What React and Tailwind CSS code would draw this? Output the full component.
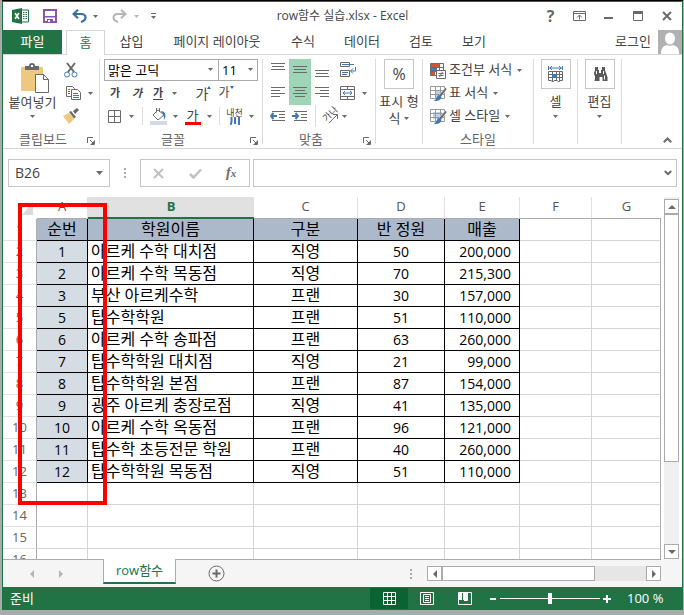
import clsx from "clsx";

const columns = [
  { name: "A", width: "w-[51px]" },
  { name: "B", width: "w-[166px]" },
  { name: "C", width: "w-[104px]" },
  { name: "D", width: "w-[87px]" },
  { name: "E", width: "w-[75px]" },
  { name: "F", width: "w-[72px]" },
  { name: "G", width: "" },
];

const headers = ["순번", "학원이름", "구분", "반 정원", "매출"];

const records = [
  [1, "아르케 수학 대치점", "직영", 50, "200,000"],
  [2, "아르케 수학 목동점", "직영", 70, "215,300"],
  [3, "부산 아르케수학", "프랜", 30, "157,000"],
  [5, "탑수학학원", "프랜", 51, "110,000"],
  [6, "아르케 수학 송파점", "프랜", 63, "260,000"],
  [7, "탑수학학원 대치점", "직영", 21, "99,000"],
  [8, "탑수학학원 본점", "프랜", 87, "154,000"],
  [9, "광주 아르케 충장로점", "직영", 41, "135,000"],
  [10, "아르케 수학 옥동점", "프랜", 96, "121,000"],
  [11, "탑수학 초등전문 학원", "프랜", 40, "260,000"],
  [12, "탑수학학원 목동점", "직영", 51, "110,000"],
];

const emptyRows = [13, 14, 15, 16];

const tabs = [
  { label: "삽입", width: "w-[53px]" },
  { label: "페이지 레이아웃", width: "w-[118px]" },
  { label: "수식", width: "w-[54px]" },
  { label: "데이터", width: "w-[64px]" },
  { label: "검토", width: "w-[54px]" },
  { label: "보기", width: "w-[52px]" },
];

function Arrow({ className }) {
  return (
    <svg
      className={clsx("shrink-0", className || "text-[#6a6a6a]")}
      width="5"
      height="3"
      viewBox="0 0 5 3"
      fill="currentColor"
      aria-hidden="true"
    >
      <path d="M0 0h5L2.500 3z" />
    </svg>
  );
}

function Icon({ w = 16, h = 16, className, children }) {
  return (
    <svg
      className={clsx("shrink-0", className)}
      width={w}
      height={h}
      viewBox={`0 0 ${w} ${h}`}
      fill="none"
      stroke="#6a6a6a"
      aria-hidden="true"
    >
      {children}
    </svg>
  );
}

function Tool({ label, className, children }) {
  return (
    <button
      type="button"
      aria-label={label}
      className={clsx("flex h-[22px] shrink-0 items-center justify-center", className)}
    >
      {children}
    </button>
  );
}

function Divider() {
  return <div className="h-[85px] w-px shrink-0 bg-[#dcdcdc]" />;
}

function Group({ label, launcher, className, children }) {
  return (
    <section aria-label={label} className={clsx("relative flex shrink-0 flex-col", className)}>
      <div className="h-[68px]">{children}</div>
      <div className={clsx("pt-1 text-center leading-[17px] text-[#666]", launcher && "pr-4")}>
        {label}
      </div>
      {launcher && (
        <button type="button" aria-label={`${label} 설정`} className="absolute right-1 bottom-[3px]">
          <Icon w={8} h={8} className="block">
            <path d="M.5 6V.5H6M3 3l3 3M7.500 3.500v4h-4" />
            <path d="M7 4v3H4z" fill="#6a6a6a" stroke="none" />
          </Icon>
        </button>
      )}
    </section>
  );
}

// Horizontal strokes used by the alignment buttons
function Lines({ rows, top = 3 }) {
  return (
    <Icon>
      {rows.map(([x, w], i) => (
        <path key={i} d={`M${x} ${top + i * 3 + 0.5}h${w}`} />
      ))}
    </Icon>
  );
}

function TitleBar() {
  const windowButton = "flex h-7 w-[29px] items-center justify-center";
  return (
    <header className="flex h-7 shrink-0 items-center">
      <div className="flex w-[170px] items-center pl-[9px]">
        <svg width="17" height="16" viewBox="0 0 17 16" aria-label="Excel">
          <path d="M8 2h8.500v12H8z" fill="#fff" stroke="#217346" />
          <path d="M11 4.500h1.500M13.500 4.500H15M11 6.500h1.500M13.500 6.500H15M11 8.500h1.500M13.500 8.500H15M11 10.500h1.500M13.500 10.500H15" stroke="#217346" />
          <path d="M0 2l10-2v16L0 14z" fill="#217346" />
          <path d="M3 5l4 6M7 5l-4 6" stroke="#fff" strokeWidth="1.600" />
        </svg>
        <button type="button" aria-label="저장" className="ml-[14px]">
          <svg className="block" width="14" height="14" viewBox="0 0 14 14">
            <path d="M1 1h12v12H1z" fill="#fff" stroke="#8657ae" strokeWidth="2" />
            <path d="M2 7h10v1.500H2zM4 10h6v3H4z" fill="#8657ae" />
            <path d="M5 11h2v2H5z" fill="#fff" />
          </svg>
        </button>
        <button type="button" aria-label="실행 취소" className="ml-[15px] flex items-center gap-[6px]">
          <Icon w={15} h={14}>
            <path d="M1.500 5H9c3 0 4.500 1.500 4.500 3.500S12 12 9 13" stroke="#3a6ea8" strokeWidth="2.200" />
            <path d="M6 .8L1.500 5 6 9.200" stroke="#3a6ea8" strokeWidth="2.200" />
          </Icon>
          <Arrow />
        </button>
        <button type="button" aria-label="다시 실행" className="ml-[14px] flex items-center gap-[7px]">
          <Icon w={15} h={14}>
            <path d="M13.500 5H6C3 5 1.500 6.500 1.500 8.500S3 12 6 13" stroke="#b5b5b5" strokeWidth="2" />
            <path d="M9 .8L13.500 5 9 9.200" stroke="#b5b5b5" strokeWidth="2" />
          </Icon>
          <Arrow className="text-[#b5b5b5]" />
        </button>
        <button type="button" aria-label="빠른 실행 도구 모음" className="ml-3">
          <Icon w={5} h={6} className="block">
            <path d="M0 .5h5" />
            <path d="M0 3h5L2.500 6z" fill="#6a6a6a" stroke="none" />
          </Icon>
        </button>
      </div>
      <h1 className="flex-1 text-center text-[12px] text-[#444]">row함수 실습.xlsx - Excel</h1>
      <div className="flex w-[170px] items-center justify-end pr-px">
        <button
          type="button"
          aria-label="도움말"
          className={clsx(windowButton, "text-base font-bold text-[#6a6a6a]")}
        >
          ?
        </button>
        <button type="button" aria-label="리본 메뉴 표시 옵션" className={windowButton}>
          <Icon w={13} h={10} className="block">
            <path d="M.5.5h12v9H.5zM1 2.500h11M6.500 8.500V4M4 6.500L6.500 4 9 6.500" />
          </Icon>
        </button>
        <button type="button" aria-label="최소화" className={windowButton}>
          <Icon w={9} h={10} className="block">
            <path d="M0 7h9" strokeWidth="2" />
          </Icon>
        </button>
        <button type="button" aria-label="최대화" className={windowButton}>
          <Icon w={10} h={10} className="block">
            <path d="M.5.5h9v9H.5z" />
            <path d="M0 1.500h10" strokeWidth="3" />
          </Icon>
        </button>
        <button type="button" aria-label="닫기" className={windowButton}>
          <Icon w={10} h={10} className="block">
            <path d="M1 1l8 8M9 1L1 9" strokeWidth="2" />
          </Icon>
        </button>
      </div>
    </header>
  );
}

function TabBar() {
  return (
    <nav className="flex h-[25px] shrink-0 border-b border-[#d4d4d4] text-[13px] text-[#444]">
      <button type="button" className="w-[59px] bg-[#217346] text-white">
        파일
      </button>
      <button
        type="button"
        className="ml-1 -mb-px w-[39px] border border-b-0 border-[#d4d4d4] bg-white text-[#217346]"
      >
        홈
      </button>
      {tabs.map((tab) => (
        <button key={tab.label} type="button" className={clsx("shrink-0", tab.width)}>
          {tab.label}
        </button>
      ))}
      <button type="button" className="mr-[7px] ml-auto">
        로그인
      </button>
      <svg width="24" height="24" viewBox="0 0 24 24" aria-hidden="true">
        <path d="M0 0h24v24H0z" fill="#b1b1b1" />
        <ellipse cx="12" cy="8.500" rx="5" ry="6" fill="#fff" />
        <path d="M3 24c0-6 2-8 6-9l3 1 3-1c4 1 6 3 6 9z" fill="#fff" />
      </svg>
    </nav>
  );
}

function ClipboardGroup() {
  return (
    <Group label="클립보드" launcher className="w-[96px]">
      <div className="flex">
        <button type="button" className="flex w-[59px] shrink-0 flex-col items-center pt-1">
          <Icon w={28} h={30} className="ml-[5px]">
            <path d="M0 4h22v24H0z" fill="#edc87e" stroke="none" />
            <path d="M4 7V3h4a3 3 0 016 0h4v4z" fill="#6a6a6a" stroke="none" />
            <path d="M10 3h2" stroke="#fff" strokeWidth="2" />
            <path d="M14.500 11.500h8l5 5v13h-13z" fill="#fff" />
            <path d="M22.500 11.500v5h5" />
          </Icon>
          <span className="w-full text-center leading-[18px] whitespace-nowrap">붙여넣기</span>
          <Arrow className="mt-1 text-[#6a6a6a]" />
        </button>
        <div className="flex w-[34px] shrink-0 flex-col gap-px">
          <Tool label="잘라내기" className="w-[18px]">
            <Icon>
              <path d="M4 1l7 9M12 1L5 10" strokeWidth="2" />
              <circle cx="4" cy="12.500" r="2.500" stroke="#4277b4" />
              <circle cx="11.500" cy="12.500" r="2.500" stroke="#4277b4" />
            </Icon>
          </Tool>
          <Tool label="복사" className="gap-[7px]">
            <Icon w={15} h={14}>
              <path d="M.5.5h6l2 2v8h-8z" fill="#fff" />
              <path d="M5.500 3.500h6l3 3v7h-9z" fill="#fff" />
              <path d="M2 3.500h2M2 5.500h2M2 7.500h2M7 7.500h5M7 9.500h6M7 11.500h6" stroke="#4277b4" />
            </Icon>
            <Arrow />
          </Tool>
          <Tool label="서식 복사" className="w-[18px]">
            <Icon>
              <path d="M0 8l6-3 5 6-5 5z" fill="#edc87e" stroke="none" />
              <path d="M6 4l2-1 5 6-2 1.500zM10 3l4-3 2 2-4 4z" fill="#6a6a6a" stroke="none" />
            </Icon>
          </Tool>
        </div>
      </div>
    </Group>
  );
}

function FontGroup() {
  return (
    <Group label="글꼴" launcher className="w-[162px]">
      <div className="flex flex-col gap-px px-1">
        <div className="flex h-[22px] text-[13px] text-black">
          <label className="relative w-[115px] border border-[#ababab]">
            <select aria-label="글꼴" className="size-full appearance-none pl-[3px] leading-5">
              <option>맑은 고딕</option>
            </select>
            <Arrow className="absolute top-2 right-[5px] text-[#6a6a6a]" />
          </label>
          <label className="relative -ml-px w-10 border border-[#ababab]">
            <select aria-label="글꼴 크기" className="size-full appearance-none pl-[3px] leading-5">
              <option>11</option>
            </select>
            <Arrow className="absolute top-2 right-1 text-[#6a6a6a]" />
          </label>
        </div>
        <div className="flex text-[11px] text-[#444]">
          <Tool label="굵게" className="w-[22px] font-bold">가</Tool>
          <Tool label="기울임꼴" className="w-[22px] font-bold italic">가</Tool>
          <Tool label="밑줄" className="w-[34px] gap-[9px]">
            <span className="border-b border-[#444] leading-[13px] font-bold">가</span>
            <Arrow />
          </Tool>
          <Tool label="글꼴 크기 크게" className="ml-[10px] w-[23px]">
            <span className="text-[14px]">가</span>
            <svg className="mb-3 -ml-px" width="4" height="3" viewBox="0 0 4 3"><path d="M0 3l2-3 2 3z" fill="#2f6db5" /></svg>
          </Tool>
          <Tool label="글꼴 크기 작게" className="w-[22px]">
            <span className="text-[12px]">가</span>
            <svg className="mb-3" width="4" height="3" viewBox="0 0 4 3"><path d="M0 0h4L2 3z" fill="#2f6db5" /></svg>
          </Tool>
        </div>
        <div className="flex items-center">
          <Tool label="테두리" className="w-[34px] gap-2">
            <Icon w={13} h={13}>
              <path d="M.5.5h12v12H.5zM6.500 0v13M0 6.500h13" />
            </Icon>
            <Arrow />
          </Tool>
          <div className="ml-1 h-[18px] w-px bg-[#dcdcdc]" />
          <Tool label="채우기 색" className="ml-1 w-[34px] gap-[6px]">
            <Icon w={17} h={17}>
              <path d="M3 7l5-5 6 5-6 5zM6.500 4.500V1a1.500 1.500 0 013 0v3" />
              <path d="M11 3c4 0 6 4 3 9 0-3 0-5-3-9z" fill="#4277b4" stroke="none" />
              <path d="M0 13h17v4H0z" fill="#d3dae4" stroke="none" />
            </Icon>
            <Arrow />
          </Tool>
          <Tool label="글꼴 색" className="w-[34px] gap-[6px]">
            <span className="flex w-4 flex-col items-center">
              <span className="leading-[14px]">가</span>
              <span className="h-[3px] w-4 bg-[#ff0000]" />
            </span>
            <Arrow />
          </Tool>
          <div className="ml-1 h-[18px] w-px bg-[#dcdcdc]" />
          <Tool label="윗주" className="w-[36px] gap-[6px] pl-1">
            <span className="flex w-4 flex-col items-center">
              <span className="text-[9px] leading-[9px] whitespace-nowrap">내천</span>
              <svg width="10" height="8" viewBox="0 0 10 8" stroke="#4277b4" strokeWidth="2" fill="none">
                <path d="M1.500 0v5L.5 8M5 0v7M9 0v8" />
              </svg>
            </span>
            <Arrow />
          </Tool>
        </div>
      </div>
    </Group>
  );
}

function AlignGroup() {
  return (
    <Group label="맞춤" launcher className="w-[112px]">
      <div className="flex flex-col pl-1">
        <div className="flex">
          <Tool label="위쪽 맞춤" className="w-[22px]">
            <Lines top={1} rows={[[1, 14], [2, 12], [1, 14]]} />
          </Tool>
          <Tool label="가운데 맞춤" className="w-[22px] bg-[#9fd5b7]">
            <Lines top={4} rows={[[1, 14], [2, 12], [1, 14]]} />
          </Tool>
          <Tool label="아래쪽 맞춤" className="w-[22px]">
            <Lines top={8} rows={[[1, 14], [2, 12], [1, 14]]} />
          </Tool>
          <Tool label="텍스트 줄 바꿈" className="ml-1 w-[22px]">
            <Icon>
              <path d="M.5.5h9v4h-9zM.5 8.500h9v6h-9z" />
              <path d="M2 2.500h12M2 10.500h6M2 12.500h5M15.500 5v4h-5M13 6.500L10.500 9l2.500 2.500" stroke="#4277b4" />
            </Icon>
          </Tool>
        </div>
        <div className="flex">
          <Tool label="왼쪽 맞춤" className="h-[24px] w-[22px]">
            <Lines top={2} rows={[[1, 14], [1, 9], [1, 14], [1, 9]]} />
          </Tool>
          <Tool label="텍스트 가운데 맞춤" className="h-[24px] w-[22px] bg-[#9fd5b7]">
            <Lines top={2} rows={[[1, 14], [3, 10], [1, 14], [3, 10]]} />
          </Tool>
          <Tool label="오른쪽 맞춤" className="h-[24px] w-[22px]">
            <Lines top={2} rows={[[1, 14], [6, 9], [1, 14], [6, 9]]} />
          </Tool>
          <Tool label="병합하고 가운데 맞춤" className="ml-[7px] h-[24px] gap-[7px]">
            <Icon w={15}>
              <path d="M.5 1.500h14v13H.5zM0 4.500h15M0 11.500h15M7.500 1v3M7.500 12v3" />
              <path d="M3 8h9M5 6L3 8l2 2M10 6l2 2-2 2" stroke="#4277b4" />
            </Icon>
            <Arrow />
          </Tool>
        </div>
        <div className="flex items-center">
          <Tool label="내어쓰기" className="w-[22px]">
            <Icon>
              <path d="M2 3.500h13M9 6.500h6M9 9.500h6M2 12.500h13" />
              <path d="M7 8H1M3.500 5L1 8l2.500 3" stroke="#4277b4" strokeWidth="2" />
            </Icon>
          </Tool>
          <Tool label="들여쓰기" className="w-[22px]">
            <Icon>
              <path d="M2 3.500h13M9 6.500h6M9 9.500h6M2 12.500h13" />
              <path d="M0 8h6M3.500 5L6 8l-2.500 3" stroke="#4277b4" strokeWidth="2" />
            </Icon>
          </Tool>
          <div className="ml-1 h-[22px] w-px bg-[#dcdcdc]" />
          <Tool label="방향" className="ml-1 gap-1 pl-[2px]">
            <span className="relative block size-4">
              <span className="absolute top-0 left-0 -rotate-45 text-[9px] leading-3 whitespace-nowrap">가나</span>
              <Icon className="block">
                <path d="M7 15l8-8M11 6.500h4.500V11" />
              </Icon>
            </span>
            <Arrow />
          </Tool>
        </div>
      </div>
    </Group>
  );
}

function BigButton({ label, icon, children }) {
  return (
    <button type="button" aria-label={label} className="flex w-full flex-col items-center">
      <span className="flex size-[30px] items-center justify-center border border-[#c6c6c6]">{icon}</span>
      <span className="mt-1 flex flex-col items-center leading-[17px] whitespace-nowrap">{children}</span>
    </button>
  );
}

function StylesGroup() {
  const grid = <path d="M.5 1.500h14v12H.5zM0 5.500h15M0 9.500h15M5.500 1v13M10.500 1v13" stroke="#9a9a9a" />;
  const brush = (
    <>
      <path d="M15.500 2.500L17 4l-6 8-2-2z" fill="#6a6a6a" stroke="#fff" strokeWidth=".5" />
      <path d="M9 9.500l2.500 2.500c-1 4-4 4-8 4 3-1 3-5 5.500-6.500z" fill="#4277b4" stroke="none" />
    </>
  );
  return (
    <Group label="스타일" className="w-[110px]">
      <div className="flex flex-col gap-px pl-[7px]">
        <Tool label="조건부 서식" className="justify-start gap-[3px]">
          <Icon w={16} h={17}>
            <path d="M.5 1.500h13v12H.5zM0 5.500h14M0 9.500h14M9.500 1v13" />
            <path d="M1 2h8v3H1zM1 10h4v3H1z" fill="#d35230" stroke="none" />
            <path d="M1 6h6v3H1z" fill="#4277b4" stroke="none" />
            <path d="M6.500 8.500h9v8h-9z" fill="#fff" />
            <path d="M8.500 11.500h5M8.500 13.500h5M12.500 10l-3 5" />
          </Icon>
          <span>조건부 서식</span>
          <Arrow className="ml-[2px] text-[#6a6a6a]" />
        </Tool>
        <Tool label="표 서식" className="justify-start gap-[3px]">
          <Icon w={17} h={17} className="-mr-px">
            <path d="M5 5h6v8H5z" fill="#bcd0e8" stroke="none" />
            {grid}
            {brush}
          </Icon>
          <span>표 서식</span>
          <Arrow className="ml-[2px] text-[#6a6a6a]" />
        </Tool>
        <Tool label="셀 스타일" className="justify-start gap-[3px]">
          <Icon w={17} h={17} className="-mr-px">
            <path d="M3 4h9v7H3z" fill="#bcd0e8" stroke="none" />
            {grid}
            {brush}
          </Icon>
          <span>셀 스타일</span>
          <Arrow className="ml-[2px] text-[#6a6a6a]" />
        </Tool>
      </div>
    </Group>
  );
}

function Ribbon() {
  return (
    <div className="flex h-[94px] shrink-0 border-b border-[#d4d4d4] pt-1 text-[13px] text-[#444]">
      <ClipboardGroup />
      <Divider />
      <FontGroup />
      <Divider />
      <AlignGroup />
      <Divider />
      <div className="w-[46px] shrink-0">
        <BigButton label="표시 형식" icon={<span className="text-base">%</span>}>
          <span>표시 형</span>
          <span className="flex items-center gap-1">
            식 <Arrow />
          </span>
        </BigButton>
      </div>
      <Divider />
      <StylesGroup />
      <Divider />
      <div className="w-[43px] shrink-0">
        <BigButton
          label="셀"
          icon={
            <Icon w={16} h={17}>
              <path d="M1 2h13M.5 0v4M14.500 0v4M4 0L2 2l2 2M11 0l2 2-2 2" stroke="#4277b4" />
              <path d="M.5 5.500h14v9H12l-1 1.500-2-1.500H6L5 16l-2-1.500H.5zM0 8.500h15M0 11.500h15M4.500 5v10M8.500 5v10M11.500 5v10" />
              <path d="M4 8h5v4H4z" fill="#4277b4" stroke="none" />
            </Icon>
          }
        >
          <span>셀</span>
          <Arrow className="mt-[5px] text-[#6a6a6a]" />
        </BigButton>
      </div>
      <Divider />
      <div className="w-[43px] shrink-0">
        <BigButton
          label="편집"
          icon={
            <Icon w={16} h={14}>
              <path d="M3 0h3v3h1v3h2V3h1V0h3v3l1 3 1.500 4v4h-5v-4h-3v4h-5v-4L2 6l1-3z" fill="#5a5a5a" stroke="none" />
              <path d="M2.500 8.500v4M4.500 4v3M11.500 4v3M12.500 8.500v4" stroke="#fff" />
            </Icon>
          }
        >
          <span>편집</span>
          <Arrow className="mt-[5px] text-[#6a6a6a]" />
        </BigButton>
      </div>
      <Divider />
      <button type="button" aria-label="리본 메뉴 축소" className="mt-auto mr-[10px] mb-[5px] ml-auto">
        <Icon w={9} h={6} className="block">
          <path d="M.8 5.200l3.700-3.700 3.700 3.700" strokeWidth="2" />
        </Icon>
      </button>
    </div>
  );
}

function FormulaBar() {
  return (
    <div className="flex shrink-0 px-[5px] pt-[10px] pb-[10px] text-[#444]">
      <div className="flex h-7 w-[102px] items-center border border-[#c6c6c6] pr-[6px]">
        <input
          aria-label="이름 상자"
          defaultValue="B26"
          className="w-full min-w-0 pl-[6px] text-sm outline-none"
        />
        <button type="button" aria-label="이름 목록">
          <svg className="block" width="7" height="4" viewBox="0 0 7 4"><path d="M0 0h7L3.500 4z" fill="#6a6a6a" /></svg>
        </button>
      </div>
      <div className="flex w-[30px] items-center justify-center">
        <Dots />
      </div>
      <div className="flex h-7 w-[110px] items-center border border-[#c6c6c6] pl-3">
        <button type="button" aria-label="취소">
          <Icon w={11} h={11} className="block"><path d="M1 1l9 9M10 1l-9 9" stroke="#c0c0c0" strokeWidth="2" /></Icon>
        </button>
        <button type="button" aria-label="입력" className="ml-[25px]">
          <Icon w={13} h={11} className="block"><path d="M1 6l3.500 3.500L12 1.500" stroke="#c0c0c0" strokeWidth="2.500" /></Icon>
        </button>
        <button
          type="button"
          aria-label="함수 삽입"
          className="ml-6 font-['Liberation_Serif',serif] text-sm font-bold text-[#6a6a6a] italic"
        >
          f<span className="text-[11px]">x</span>
        </button>
      </div>
      <div className="ml-[3px] flex h-7 flex-1 items-center border border-[#c6c6c6] pr-1">
        <input aria-label="수식 입력줄" className="h-full min-w-0 flex-1 px-2 text-sm outline-none" />
        <button type="button" aria-label="수식 입력줄 확장">
          <Icon w={8} h={6} className="block"><path d="M.8 1L4 4.200 7.200 1" strokeWidth="2" /></Icon>
        </button>
      </div>
    </div>
  );
}

function Dots() {
  return (
    <svg width="2" height="10" viewBox="0 0 2 10" fill="#ababab" aria-hidden="true">
      <path d="M0 0h2v2H0zM0 4h2v2H0zM0 8h2v2H0z" />
    </svg>
  );
}

function RowHeader({ n }) {
  return (
    <th
      scope="row"
      className="border-r border-b border-r-[#ababab] border-b-[#e1e1e1] p-0 text-[13px] font-normal text-[#666]"
    >
      {n}
    </th>
  );
}

function EmptyCells({ count }) {
  return Array.from({ length: count }, (_, i) => (
    <td
      key={i}
      className="border-r border-b border-[#d4d4d4] p-0 last:border-r-[#ababab]"
    />
  ));
}

function Sheet() {
  const cell = "border-r border-b border-black p-0 text-center";
  return (
    <div className="relative min-w-0 flex-1 overflow-hidden">
      <table className="w-full table-fixed border-separate border-spacing-0 leading-[21px] text-black">
        <thead>
          <tr className="h-[22px]">
            <td className="w-[34px] p-0">
              <svg className="mr-1 ml-auto block" width="11" height="13" viewBox="0 0 11 13" aria-hidden="true">
                <path d="M11 0v13H0z" fill="#dadada" />
              </svg>
            </td>
            {columns.map((col) => (
              <th
                key={col.name}
                scope="col"
                className={clsx(
                  "p-0 align-top text-[13px] leading-[18px]",
                  col.width,
                  col.name === "B"
                    ? "border-b-2 border-[#217346] bg-[#e1e1e1] font-bold text-[#217346]"
                    : "border-r border-b border-r-[#e1e1e1] border-b-[#ababab] font-normal text-[#555] last:border-r-0"
                )}
              >
                {col.name}
              </th>
            ))}
          </tr>
        </thead>
        <tbody>
          <tr className="h-[22px]">
            <RowHeader n={1} />
            {headers.map((title) => (
              <td key={title} className={clsx(cell, "bg-[#acb9ca]")}>
                {title}
              </td>
            ))}
            <EmptyCells count={2} />
          </tr>
          {records.map(([no, name, type, seats, sales], i) => (
            <tr key={no} className="h-[22px]">
              <RowHeader n={i + 2} />
              <td className={clsx(cell, "bg-[#d6dce4] text-sm leading-[21px]")}>{no}</td>
              <td className="border-r border-b border-black p-0 pl-[3px] text-left whitespace-nowrap">{name}</td>
              <td className={cell}>{type}</td>
              <td className={clsx(cell, "text-sm leading-[21px]")}>{seats}</td>
              <td className="border-r border-b border-black p-0 pr-2 text-right text-sm leading-[21px]">{sales}</td>
              <EmptyCells count={2} />
            </tr>
          ))}
          {emptyRows.map((n) => (
            <tr key={n} className="h-[22px]">
              <RowHeader n={n} />
              <EmptyCells count={7} />
            </tr>
          ))}
        </tbody>
      </table>
      {/* Highlight around the number column */}
      <div className="pointer-events-none absolute top-[6px] left-[15px] h-[302px] w-[89px] border-4 border-[#ff0000]" />
    </div>
  );
}

function ScrollButton({ label, path, className }) {
  return (
    <button
      type="button"
      aria-label={label}
      className={clsx("flex size-[15px] shrink-0 items-center justify-center border border-[#ababab] bg-white", className)}
    >
      <svg width="8" height="8" viewBox="0 0 8 8" fill="#6a6a6a">
        <path d={path} />
      </svg>
    </button>
  );
}

function VerticalScrollbar() {
  return (
    <div className="mr-[3px] ml-[3px] flex w-[15px] shrink-0 flex-col bg-[#f0f0f0] pt-[2px]">
      <ScrollButton label="위로" path="M0 6h8L4 2z" />
      <div className="h-[248px] border border-[#ababab] bg-white" />
      <ScrollButton label="아래로" path="M0 2h8L4 6z" className="mt-auto" />
    </div>
  );
}

function SheetBar() {
  return (
    <div className="flex h-7 shrink-0 bg-[#f5f5f5]">
      <div className="flex min-w-0 flex-1 border-t border-[#ababab]">
        <div className="flex w-[100px] items-center gap-[25px] pl-[27px]">
          <button type="button" aria-label="이전 시트">
            <svg className="block" width="4" height="8" viewBox="0 0 4 8"><path d="M4 0v8L0 4z" fill="#b5b5b5" /></svg>
          </button>
          <button type="button" aria-label="다음 시트">
            <svg className="block" width="4" height="8" viewBox="0 0 4 8"><path d="M0 0v8l4-4z" fill="#b5b5b5" /></svg>
          </button>
        </div>
        <button
          type="button"
          className="-mt-px mb-[3px] w-[73px] border-x border-b-2 border-x-[#ababab] border-b-[#217346] bg-white text-[13px] text-[#217346]"
        >
          row함수
        </button>
        <button type="button" aria-label="새 시트" className="ml-8">
          <Icon w={17} h={17} className="block">
            <circle cx="8.500" cy="8.500" r="7.500" />
            <path d="M8.500 4.500v8M4.500 8.500h8" strokeWidth="2" />
          </Icon>
        </button>
        <div className="ml-auto flex items-center">
          <Dots />
          <div className="ml-[15px] flex h-[15px] w-[234px] bg-[#e6e6e6]">
            <ScrollButton label="왼쪽으로" path="M6 0v8L2 4z" />
            <div className="w-[153px] border border-[#ababab] bg-white" />
            <ScrollButton label="오른쪽으로" path="M2 0v8l4-4z" className="ml-auto" />
          </div>
        </div>
      </div>
      <div className="w-[21px] shrink-0" />
    </div>
  );
}

function StatusBar() {
  return (
    <footer className="flex h-[23px] shrink-0 items-center bg-[#217346] text-[13px] text-white">
      <span className="pl-[7px]">준비</span>
      <button
        type="button"
        aria-label="기본"
        className="ml-auto flex h-[21px] w-[38px] items-center justify-center bg-[#0a6332]"
      >
        <Icon w={13} h={13}>
          <path d="M.5.5h12v12H.5zM4.500 0v13M8.500 0v13M0 4.500h13M0 8.500h13" stroke="#fff" />
        </Icon>
      </button>
      <button type="button" aria-label="페이지 레이아웃" className="flex w-[38px] justify-center">
        <Icon w={14} h={13}>
          <path d="M.5.5h13v12H.5zM3.500 2.500h7v8h-7zM5 4.500h4M5 6.500h4M5 8.500h4" stroke="#fff" />
        </Icon>
      </button>
      <button type="button" aria-label="페이지 나누기 미리 보기" className="flex w-[38px] justify-center">
        <Icon w={14} h={13}>
          <path d="M.5.5h13v12H.5z" stroke="#fff" />
          <path d="M1 1h3v7H1zM5 1h4v7H5z" fill="#fff" stroke="none" />
          <path d="M9.500 1v7.500H6" stroke="#fff" />
        </Icon>
      </button>
      <button type="button" aria-label="축소" className="ml-[3px] flex w-[12px] justify-center">
        <span className="h-[2px] w-[6px] bg-white" />
      </button>
      <input
        type="range"
        aria-label="확대/축소"
        min="0"
        max="200"
        defaultValue="100"
        className="ml-px h-[11px] w-[100px] appearance-none bg-transparent [&::-webkit-slider-runnable-track]:h-px [&::-webkit-slider-runnable-track]:bg-white [&::-webkit-slider-thumb]:-mt-[5px] [&::-webkit-slider-thumb]:h-[11px] [&::-webkit-slider-thumb]:w-1 [&::-webkit-slider-thumb]:appearance-none [&::-webkit-slider-thumb]:bg-white"
      />
      <button type="button" aria-label="확대" className="ml-[3px]">
        <Icon w={8} h={8} className="block">
          <path d="M4 0v8M0 4h8" stroke="#fff" strokeWidth="2" />
        </Icon>
      </button>
      <span className="w-[71px] pl-4">100 %</span>
    </footer>
  );
}

export default function App() {
  return (
    <div className="h-screen bg-[#a6aca9] pr-px pb-[5px] pl-[2px] font-['Open_Sans','Noto_Sans_CJK_KR',sans-serif]">
      <div className="flex h-full flex-col overflow-hidden border-t border-black bg-white">
        <div className="flex min-h-0 flex-1 flex-col border border-b-0 border-[#217346]">
          <TitleBar />
          <TabBar />
          <Ribbon />
          <FormulaBar />
          <div className="flex min-h-0 flex-1">
            <Sheet />
            <VerticalScrollbar />
          </div>
          <SheetBar />
          <StatusBar />
        </div>
      </div>
    </div>
  );
}
